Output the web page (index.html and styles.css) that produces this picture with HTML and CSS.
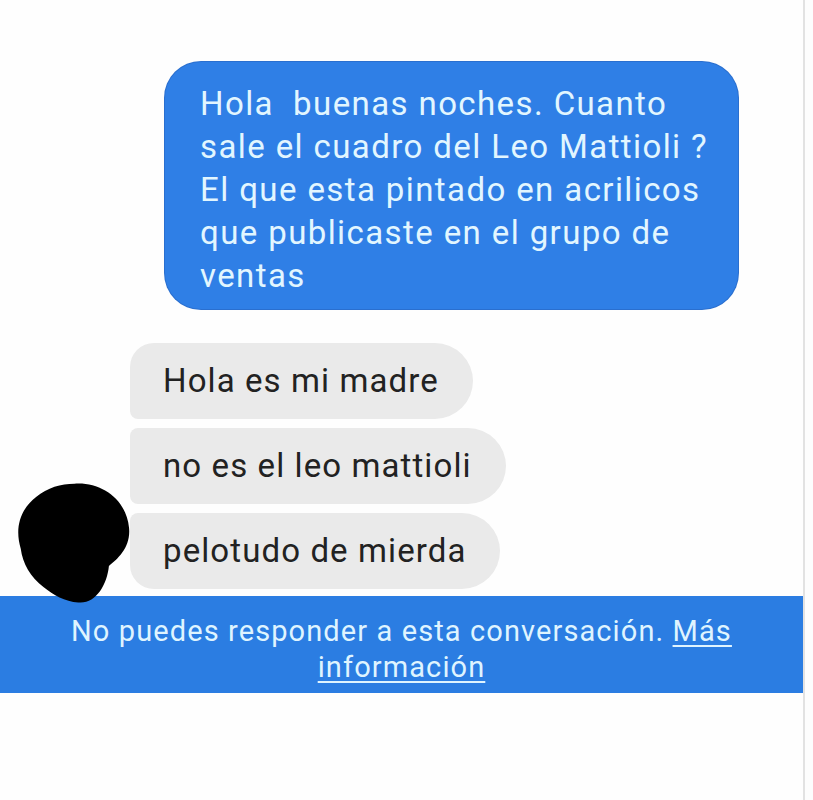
FILE: index.html
```html
<!DOCTYPE html>
<html>

<head>
    <link rel="stylesheet" href="styles.css">
</head>

<body>
    <div class="chat">
        <div class="sent">
            <div class="bubble-out">Hola &nbsp;buenas noches. Cuanto<br>sale el cuadro del Leo Mattioli ?<br>El que esta pintado en acrilicos<br>que publicaste en el grupo de<br>ventas</div>
        </div>

        <div class="received">
            <div class="avatar">
                <svg width="120" height="130" viewBox="0 0 120 130">
                    <path d="M62 2 C90 0 116 18 119 48 C121 68 108 80 98 88 C96 108 84 128 66 126 C52 125 40 118 30 110 C16 100 8 85 6 70 C0 50 4 30 22 16 C34 6 48 2 62 2 Z" fill="#000" />
                </svg>
            </div>
            <div class="bubbles">
                <div class="bubble-in first">Hola es mi madre</div>
                <div class="bubble-in">no es el leo mattioli</div>
                <div class="bubble-in last">pelotudo de mierda</div>
            </div>
        </div>

        <div class="notice">
            No puedes responder a esta conversación. <span class="more">Más<br>información</span>
        </div>
    </div>
</body>

</html>
```

FILE: styles.css
```css
body {
    margin: 0;
    background-color: #fdfdfd;
    font-family: Roboto, "Noto Sans", sans-serif;
}

.chat {
    width: 805px;
    height: 800px;
    border-right: 2px solid #e2e2e2;
    box-sizing: border-box;
    background-color: #fefefe;
}

/* outgoing message */
.sent {
    padding-top: 62px;
    padding-left: 165px;
}

.bubble-out {
    width: 573px;
    box-sizing: border-box;
    background-color: #2f7fe6;
    color: #e2f6ff;
    border-radius: 36px;
    padding: 20px 20px 12px 35px;
    font-size: 33px;
    line-height: 43px;
    letter-spacing: 1.4px;
    white-space: nowrap;
    box-shadow: 0 0 0 1px #2a6fcf;
}

/* incoming messages */
.received {
    display: flex;
    margin-top: 34px;
}

.avatar {
    width: 130px;
    display: flex;
    align-items: flex-end;
    padding-left: 15px;
    box-sizing: border-box;
    margin-bottom: -20px;
    position: relative;
    z-index: 2;
}

.avatar svg {
    display: block;
}

.bubbles {
    display: flex;
    flex-direction: column;
    align-items: flex-start;
    gap: 9px;
}

.bubble-in {
    background-color: #eaeaea;
    color: #222;
    font-size: 33px;
    line-height: 36px;
    letter-spacing: 1.1px;
    padding: 20px 34px 20px 33px;
    border-radius: 8px 38px 38px 8px;
}

.bubble-in.first {
    border-top-left-radius: 24px;
}

.bubble-in.last {
    border-bottom-left-radius: 24px;
}

/* blocked notice */
.notice {
    margin-top: 7px;
    height: 97px;
    box-sizing: border-box;
    background-color: #2b7de2;
    color: #dff4ff;
    text-align: center;
    font-size: 29px;
    line-height: 36px;
    letter-spacing: 1.1px;
    padding-top: 17px;
    position: relative;
    z-index: 1;
}

.more {
    text-decoration: underline;
    text-underline-offset: 4px;
}
```
